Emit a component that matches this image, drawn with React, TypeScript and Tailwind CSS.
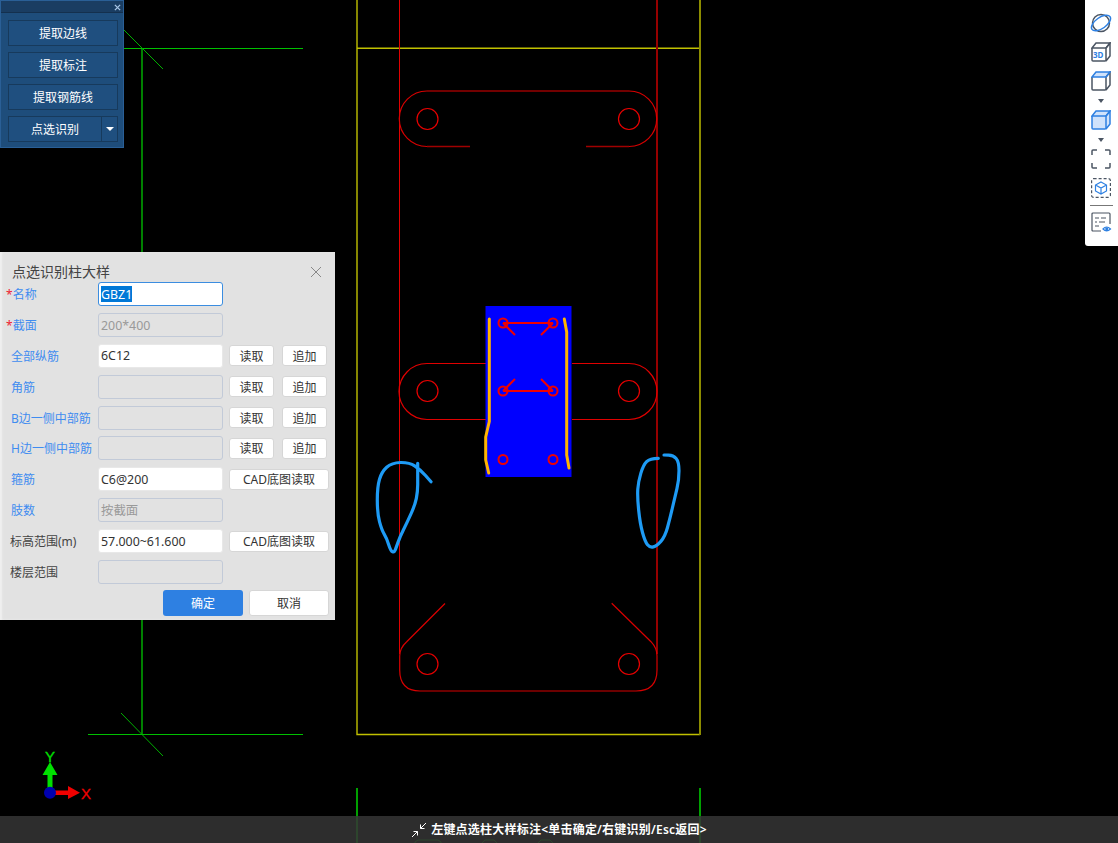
import React from "react";

const gray = "#4b5563";
const blue = "#2e80e2";

// rounds off a hand drawn stroke through its points
function smooth(pts: number[][]) {
  let d = `M${pts[0][0]} ${pts[0][1]}`;
  for (let i = 1; i < pts.length - 1; i++) {
    const mx = (pts[i][0] + pts[i + 1][0]) / 2;
    const my = (pts[i][1] + pts[i + 1][1]) / 2;
    d += `Q${pts[i][0]} ${pts[i][1]} ${mx} ${my}`;
  }
  const last = pts[pts.length - 1];
  return d + `L${last[0]} ${last[1]}`;
}

const leftMark = [
  [417.7, 463.3], [417.7, 478], [417.7, 491.7], [415, 505], [406.7, 523.3], [400, 536.7], [396, 548], [394.3, 552.3],
  [390.7, 551], [386.7, 538.3], [381.7, 530], [377.3, 513.3], [377.3, 486.7], [381.7, 471.7], [391.7, 462.7],
  [409.3, 462.3], [420, 469.3], [431, 481.7],
];
const rightMark = [
  [658.3, 458.3], [650, 458.3], [643.3, 465], [638.3, 481.7], [637.3, 496.7], [640, 523.3], [645, 541.7], [650, 547.7],
  [656.7, 546], [665, 536.7], [670, 518.3], [675, 496.7], [679, 480], [679, 461.7], [673.3, 455.3], [664, 455],
];

function CadCanvas() {
  return (
    <svg className="absolute inset-0" width="1118" height="843" viewBox="0 0 1118 843" fill="none">
      {/* green axis lines */}
      <g shapeRendering="crispEdges">
        <path d="M142 48V735" stroke="#008000" strokeWidth="2" />
        <path d="M100 48.5H303M88 734.5H303" stroke="#00c000" />
        <path d="M357 788V843M700 788V843" stroke="#00a000" strokeWidth="2" />
      </g>
      <path d="M124 30L163 69M121 713L163 756" stroke="#00b000" />

      {/* yellow outline */}
      <path d="M357 0V734.500H700M357 48.300H700" stroke="#c0c000" strokeWidth="1.400" />
      <path d="M700 0V735" stroke="#8c8c00" strokeWidth="2" shapeRendering="crispEdges" />

      {/* red guide lines */}
      <g shapeRendering="crispEdges">
        <path d="M399.5 0V654" stroke="#e00000" />
        <path d="M657 0V654" stroke="#960000" strokeWidth="2" />
      </g>

      {/* top bar */}
      <path d="M427 91H629" stroke="#980000" strokeWidth="1.500" />
      <path d="M629 91A27.750 27.750 0 0 1 629 146.500M427 91A27.750 27.750 0 0 0 427 146.500" stroke="#d80000" strokeWidth="1.200" />
      <path d="M427 146.500H470M586 146.500H629" stroke="#a00000" strokeWidth="1.500" />

      {/* middle bar */}
      <path
        d="M486 363.500H427A28 28 0 0 0 427 419.500H486M572 363.500H629A28 28 0 0 1 629 419.500H572"
        stroke="#e00000"
        strokeWidth="1.200"
      />

      {/* bottom bar */}
      <path
        d="M445 603.500L406.700 641.700Q399.700 648 399.700 656V670Q399.700 691 420 691H636Q657 691 657 670V656Q657 648 651 641.700L611.700 603.300"
        stroke="#d80000"
        strokeWidth="1.200"
      />

      {/* holes */}
      <g stroke="#e80000" strokeWidth="1.200">
        <circle cx="427.500" cy="119" r="10.500" />
        <circle cx="629" cy="119" r="10.500" />
        <circle cx="427.500" cy="391" r="10.500" />
        <circle cx="629" cy="391" r="10.500" />
        <circle cx="427.500" cy="664" r="10.500" />
        <circle cx="629" cy="664" r="10.500" />
      </g>

      {/* selected section */}
      <rect x="485.500" y="306" width="86" height="171" fill="#0000ff" />
      <g stroke="#f00000" strokeWidth="2">
        <circle cx="503" cy="323" r="4.500" />
        <circle cx="553" cy="323" r="4.500" />
        <circle cx="503" cy="391" r="4.500" />
        <circle cx="553" cy="391" r="4.500" />
        <circle cx="503" cy="459.500" r="4.500" />
        <circle cx="553" cy="459.500" r="4.500" />
        <path d="M503 323H553M503 323L515 335M553 323L541 335M503 391H553M503 391L515 379M553 391L541 379" />
      </g>
      <g stroke="#ffb400" strokeWidth="3" strokeLinecap="round" strokeLinejoin="round">
        <path d="M489.300 319V421.500L485.700 437V460L488.700 473" />
        <path d="M564.300 319L566.700 332V455L569 468" />
      </g>

      {/* hand drawn marks */}
      <g stroke="#1e9bf5" strokeWidth="3.200" strokeLinecap="round" strokeLinejoin="round">
        <path d={smooth(leftMark)} />
        <path d={smooth(rightMark)} />
      </g>

      {/* ucs icon */}
      <path d="M47.500 792V775H42.500L50 762L57.500 775H52.500V792Z" fill="#00e000" />
      <path d="M50 790.500H68V786L80 792.700L68 799V795H50Z" fill="#f00000" />
      <circle cx="50" cy="792.700" r="6" fill="#0000b0" />
      <text
        x="50"
        y="762"
        textAnchor="middle"
        fontSize="15"
        fill="#00e000"
        stroke="#00e000"
        strokeWidth="0.300"
        fontFamily="Liberation Sans"
      >
        Y
      </text>
      <text
        x="86"
        y="799"
        textAnchor="middle"
        fontSize="15"
        fill="#f00000"
        stroke="#f00000"
        strokeWidth="0.300"
        fontFamily="Liberation Sans"
      >
        X
      </text>

      {/* stuff behind the status bar */}
      <path d="M415 843V842L418 840H438L441 842V843M482 843L485 840H494L497 843M538 843L541 840H550L553 843" stroke="#00a000" />
    </svg>
  );
}

function ToolButton({ label }: { label: string }) {
  return (
    <button className="w-[110px] h-[26px] pt-[2px] bg-[#1f4f7f] border border-[#173a5c] text-white text-xs">
      {label}
    </button>
  );
}

function ExtractPanel() {
  return (
    <div className="absolute left-0 top-0 w-[124px] h-[148px] bg-[#1e4d7b] border border-[#2a5f96] flex flex-col">
      <div className="h-[12px] bg-[#1a3d62] border-b border-[#14304e] flex items-center justify-end pr-[2px] pt-[2px] shrink-0">
        <svg width="7" height="7" viewBox="0 0 8 8" stroke="#a9c6e6" strokeWidth="1.500">
          <path d="M1 1L7 7M7 1L1 7" />
        </svg>
      </div>
      <div className="flex flex-col gap-[6px] pl-[7px] pt-[7px]">
        <ToolButton label="提取边线" />
        <ToolButton label="提取标注" />
        <ToolButton label="提取钢筋线" />
        <div className="flex h-[26px]">
          <button className="w-[94px] pt-[2px] bg-[#1f4f7f] border border-[#173a5c] text-white text-xs">点选识别</button>
          <button className="w-[16px] bg-[#1f4f7f] border border-l-0 border-[#173a5c] flex items-center justify-center">
            <svg width="8" height="4" viewBox="0 0 8 4" fill="#ffffff">
              <path d="M0 0H8L4 4Z" />
            </svg>
          </button>
        </div>
      </div>
    </div>
  );
}

function SmallButton({ label }: { label: string }) {
  return (
    <button className="w-[45px] h-[21px] pt-[2px] bg-white border border-[#d6d6d6] rounded-[3px] text-xs text-[#333]">
      {label}
    </button>
  );
}

function CadButton() {
  return (
    <button className="ml-[6px] w-[100px] h-[21px] pt-[2px] bg-white border border-[#d6d6d6] rounded-[3px] text-xs text-[#333]">
      CAD底图读取
    </button>
  );
}

function FieldLabel({ text, required, color }: { text: string; required?: boolean; color: string }) {
  return (
    <div className={`w-[98px] shrink-0 pt-[2px] text-xs whitespace-nowrap ${color} ${required ? "pl-[6px]" : "pl-[11px]"}`}>
      {required && <span className="text-[#e23]">*</span>}
      {text}
    </div>
  );
}

function Input({ value, disabled }: { value?: string; disabled?: boolean }) {
  return (
    <div
      className={`w-[125px] h-[24px] rounded-[3px] border px-[2px] pt-[2px] text-[12.4px] flex items-center ${
        disabled ? "bg-[#e2e2e2] border-[#c2cad8] text-[#999]" : "bg-white border-[#e8e8e8] text-[#333]"
      }`}
    >
      {value}
    </div>
  );
}

function ReadAdd() {
  return (
    <div className="flex gap-[8px] ml-[6px]">
      <SmallButton label="读取" />
      <SmallButton label="追加" />
    </div>
  );
}

function Dialog() {
  const labelBlue = "text-[#3f8cf0]";
  return (
    <div className="absolute left-0 top-[252px] w-[335px] h-[368px] bg-[#e2e2e2] shadow-[inset_2px_0_2px_#f0f0f0] flex flex-col">
      <div className="h-[30px] shrink-0 flex items-center justify-between pl-[12px] pr-[13px] pt-[10px]">
        <span className="text-sm text-[#444]">点选识别柱大样</span>
        <svg width="12" height="12" viewBox="0 0 12 12" stroke="#888" strokeWidth="1">
          <path d="M1 1L11 11M11 1L1 11" />
        </svg>
      </div>

      <div className="flex flex-col gap-[6.9px]">
        <div className="flex items-center h-[24px]">
          <FieldLabel text="名称" required color={labelBlue} />
          <div className="w-[125px] h-[24px] rounded-[3px] border border-[#3b8de0] bg-white px-[2px] text-[12.4px] text-white flex items-center">
            <span className="bg-[#0078d7] h-[16px] leading-[18px]">GBZ1</span>
          </div>
        </div>
        <div className="flex items-center h-[24px]">
          <FieldLabel text="截面" required color={labelBlue} />
          <Input value="200*400" disabled />
        </div>
        <div className="flex items-center h-[24px]">
          <FieldLabel text="全部纵筋" color={labelBlue} />
          <Input value="6C12" />
          <ReadAdd />
        </div>
        <div className="flex items-center h-[24px]">
          <FieldLabel text="角筋" color={labelBlue} />
          <Input disabled />
          <ReadAdd />
        </div>
        <div className="flex items-center h-[24px]">
          <FieldLabel text="B边一侧中部筋" color={labelBlue} />
          <Input disabled />
          <ReadAdd />
        </div>
        <div className="flex items-center h-[24px]">
          <FieldLabel text="H边一侧中部筋" color={labelBlue} />
          <Input disabled />
          <ReadAdd />
        </div>
        <div className="flex items-center h-[24px]">
          <FieldLabel text="箍筋" color={labelBlue} />
          <Input value="C6@200" />
          <CadButton />
        </div>
        <div className="flex items-center h-[24px]">
          <FieldLabel text="肢数" color={labelBlue} />
          <Input value="按截面" disabled />
        </div>
        <div className="flex items-center h-[24px]">
          <div className="w-[98px] shrink-0 pl-[10px] pt-[2px] text-xs text-[#444] whitespace-nowrap">标高范围(m)</div>
          <Input value="57.000~61.600" />
          <CadButton />
        </div>
        <div className="flex items-center h-[24px]">
          <div className="w-[98px] shrink-0 pl-[10px] pt-[2px] text-xs text-[#444] whitespace-nowrap">楼层范围</div>
          <Input disabled />
        </div>
      </div>

      <div className="flex justify-end gap-[6px] mt-[6px] pr-[6px]">
        <button className="w-[80px] h-[26px] pt-[2px] rounded-[3px] bg-[#2e80e2] text-white text-xs">确定</button>
        <button className="w-[80px] h-[26px] pt-[2px] rounded-[3px] bg-white border border-[#d6d6d6] text-[#333] text-xs">
          取消
        </button>
      </div>
    </div>
  );
}

function Cube({ active, top }: { active?: boolean; top?: boolean }) {
  const edge = active ? blue : gray;
  return (
    <svg width="20" height="20" viewBox="0 0 20 20" fill="none" strokeWidth="1.500">
      {(active || top) && <path d="M1 6L5 1H19L15 6Z" fill="#cfe2fb" />}
      {active && <path d="M1 6H15V19H1Z M15 6L19 1V15L15 19Z" fill="#cfe2fb" />}
      <path d="M1 6V18Q1 19 2 19H14Q15 19 15 18V6L19 1V14L15 19" stroke={edge} />
      <path d="M1 6L5 1H19L15 6H1Z" stroke={active || top ? blue : gray} />
    </svg>
  );
}

function Caret() {
  return (
    <svg width="6" height="4" viewBox="0 0 6 4" fill={gray}>
      <path d="M0 0H6L3 4Z" />
    </svg>
  );
}

function ViewToolbar() {
  return (
    <div className="absolute right-0 top-0 w-[33px] h-[246px] bg-white rounded-bl-[3px] flex flex-col items-center pt-[13px] pr-[1px]">
      <svg width="22" height="20" viewBox="0 0 22 20" fill="none" strokeWidth="1.500">
        <circle cx="11" cy="10" r="8.500" stroke={gray} />
        <ellipse cx="11" cy="10" rx="11" ry="5.500" transform="rotate(-35 11 10)" stroke={blue} />
      </svg>
      <div className="relative mt-[9px] w-[20px] h-[20px]">
        <Cube />
        <span className="absolute left-[2px] top-[8px] text-[8px] leading-[10px] font-bold text-[#2e80e2]">3D</span>
      </div>
      <div className="mt-[9px] h-[20px]">
        <Cube top />
      </div>
      <div className="mt-[8px] h-[4px] flex">
        <Caret />
      </div>
      <div className="mt-[7px] h-[20px]">
        <Cube active />
      </div>
      <div className="mt-[8px] h-[4px] flex">
        <Caret />
      </div>
      <svg className="mt-[7px]" width="20" height="20" viewBox="0 0 20 20" fill="none" stroke={gray} strokeWidth="1.500">
        <path d="M1 6V2Q1 1 2 1H6M14 1H18Q19 1 19 2V6M19 14V18Q19 19 18 19H14M6 19H2Q1 19 1 18V14" />
      </svg>
      <svg className="mt-[9px]" width="20" height="20" viewBox="0 0 20 20" fill="none" strokeWidth="1.200">
        <rect x="0.600" y="0.600" width="18.800" height="18.800" rx="2" stroke={gray} strokeDasharray="3 2" />
        <path d="M10 4L15.500 7V13L10 16L4.500 13V7Z M4.500 7L10 10L15.500 7M10 10V16" stroke={blue} />
      </svg>
      <div className="mt-[7px] w-[23px] h-[1px] bg-[#777]" />
      <svg className="mt-[6px]" width="21" height="20" viewBox="0 0 21 20" fill="none" strokeWidth="1.200">
        <path d="M10 19H2Q1 19 1 18V2Q1 1 2 1H18Q19 1 19 2V12" stroke={gray} />
        <path d="M4 6H8M10 6H15M4 10H6M8 10H14M4 14H8" stroke={gray} />
        <path d="M12 17Q15.500 13 19.500 17Q15.500 20.500 12 17Z" stroke={blue} />
        <circle cx="15.700" cy="16.800" r="1.500" fill={blue} />
      </svg>
    </div>
  );
}

function StatusBar() {
  return (
    <div className="absolute left-0 right-0 bottom-0 h-[27px] bg-[#353535]/85 flex items-center justify-center text-xs text-white font-semibold tracking-[0.22px]">
      <svg className="mr-[4px]" width="16" height="16" viewBox="0 0 16 16" fill="none" stroke="#ffffff" strokeWidth="1">
        <path d="M15 1L9.500 6.500M9.500 2.500V6.500H13.500M1 15L6.500 9.500M2.500 9.500H6.500V13.500" />
      </svg>
      <span>左键点选柱大样标注&lt;单击确定/右键识别/Esc返回&gt;</span>
    </div>
  );
}

export default function App() {
  return (
    <div className="relative w-[1118px] h-[843px] overflow-hidden bg-black font-['Noto_Sans','Noto_Sans_CJK_SC',sans-serif]">
      <CadCanvas />
      <ExtractPanel />
      <Dialog />
      <ViewToolbar />
      <StatusBar />
    </div>
  );
}
